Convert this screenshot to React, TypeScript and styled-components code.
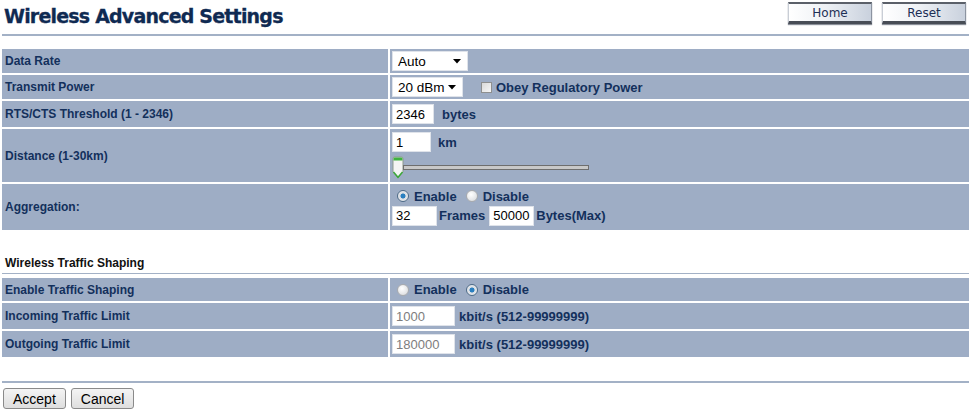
import { styled, createGlobalStyle } from "styled-components";

const GlobalStyle = createGlobalStyle`
  html, body { margin: 0; padding: 0; background: #fff; }
  body { font-family: "Liberation Sans", Arial, sans-serif; }
`;

const navy = "#13305c";
const rowBg = "#9eadc5";

const Page = styled.div`
  width: 971px;
  padding: 0 2px;
  box-sizing: border-box;
`;

const Header = styled.div`
  display: flex;
  justify-content: space-between;
  align-items: flex-start;
  height: 34px;
  border-bottom: 2px solid #a3b1c6;
`;

const Title = styled.h1`
  margin: 5px 0 0 2px;
  font-family: "DejaVu Sans", Verdana, sans-serif;
  font-size: 19px;
  font-weight: bold;
  color: #0f2a52;
  letter-spacing: -0.8px;
  -webkit-text-stroke: 0.3px #0f2a52;
`;

const NavButtons = styled.div`
  display: flex;
  gap: 10px;
  margin: 2px 3px 0 0;
`;

const NavButton = styled.div`
  width: 82px;
  height: 17px;
  box-sizing: content-box;
  border-top: 2px solid #5b6069;
  border-bottom: 3px solid #484d56;
  border-left: 1px solid #c9ced6;
  border-right: 1px solid #8c94a1;
  background: linear-gradient(to right, #ffffff 0%, #eef1f5 45%, #c9d1dd 100%);
  box-shadow: 0 1px 1px #8a8f98;
  display: flex;
  align-items: center;
  justify-content: center;
  font-family: "DejaVu Sans", Verdana, sans-serif;
  font-size: 12px;
  color: #1d2f55;
`;

const Table = styled.div<{ $top: number }>`
  display: flex;
  flex-direction: column;
  gap: 2px;
  margin-top: ${(p) => p.$top}px;
`;

const Row = styled.div<{ $h: number }>`
  display: grid;
  grid-template-columns: 386px 1fr;
  column-gap: 2px;
  height: ${(p) => p.$h}px;
`;

const LabelCell = styled.div`
  background: ${rowBg};
  display: flex;
  align-items: center;
  padding-left: 3px;
  font-size: 12px;
  font-weight: bold;
  color: ${navy};
`;

const ValueCell = styled.div`
  background: ${rowBg};
  display: flex;
  flex-direction: column;
  justify-content: center;
  gap: 2px;
  padding-left: 2px;
`;

const Line = styled.div<{ $gap?: number }>`
  display: flex;
  align-items: center;
  gap: ${(p) => p.$gap ?? 4}px;
  font-size: 13px;
  font-weight: bold;
  color: ${navy};
  white-space: nowrap;
`;

const Unit = styled.span<{ $left?: number }>`
  margin-left: ${(p) => p.$left ?? 0}px;
`;

const TextBox = styled.div<{ $w: number; $disabled?: boolean }>`
  width: ${(p) => p.$w}px;
  height: 20px;
  box-sizing: border-box;
  background: #fff;
  border: 1px solid #dfe3ea;
  padding: 0 3px;
  display: flex;
  align-items: center;
  font-size: 13px;
  font-weight: normal;
  color: ${(p) => (p.$disabled ? "#7d7d7d" : "#000")};
`;

const Select = styled.div<{ $w: number }>`
  width: ${(p) => p.$w}px;
  height: 20px;
  box-sizing: border-box;
  background: #fff;
  border: 1px solid #dfe3ea;
  padding: 0 6px 0 5px;
  display: flex;
  align-items: center;
  justify-content: space-between;
  font-size: 13.5px;
  font-weight: normal;
  color: #000;
`;

const Caret = () => (
  <svg width="8" height="5" viewBox="0 0 8 5">
    <path d="M0 0h8L4 4.5z" fill="#000" />
  </svg>
);

const CheckBox = styled.span`
  width: 11px;
  height: 11px;
  box-sizing: border-box;
  border: 1px solid #8e8f8f;
  background: linear-gradient(135deg, #d9d9d9, #f6f6f6);
  margin-left: 14px;
`;

const RadioDot = styled.span<{ $on?: boolean }>`
  width: 12px;
  height: 12px;
  box-sizing: border-box;
  border-radius: 50%;
  border: 1px solid ${(p) => (p.$on ? "#4d6a87" : "#a9abae")};
  background: ${(p) =>
    p.$on
      ? "radial-gradient(circle, #2a7fc0 0 2.2px, #d8dde3 2.8px, #f4f5f7 100%)"
      : "radial-gradient(circle at 40% 35%, #ffffff, #d5d7da)"};
  margin: 0 1px 0 5px;
`;

const Radio = ({ on, label }: { on?: boolean; label: string }) => (
  <>
    <RadioDot $on={on} />
    <span>{label}</span>
  </>
);

const Slider = styled.div`
  display: flex;
  align-items: center;
  height: 23px;
  padding-top: 2px;
`;

const Track = styled.div`
  width: 184px;
  height: 3px;
  background: #c8c8c8;
  border: 1px solid #6e6e6e;
  margin-left: -1px;
`;

const Thumb = () => (
  <svg width="12" height="23" viewBox="0 0 12 23">
    <path d="M1 2.5 Q1 1 2.5 1 H9.5 Q11 1 11 2.5 V16 L6 22 L1 16 Z" fill="#f4f4f4" stroke="#8d9a8d" />
    <path d="M1.5 2.5 Q1.5 1.5 2.5 1.5 H9.5 Q10.5 1.5 10.5 2.5 V4.5 H1.5 Z" fill="#3fb23f" />
    <path d="M1.5 16 L6 21.3 L10.5 16" fill="none" stroke="#39a839" strokeWidth="1.4" />
  </svg>
);

const SectionTitle = styled.div`
  margin-top: 26px;
  padding: 0 0 3px 3px;
  font-size: 12px;
  font-weight: bold;
  color: #111;
  border-bottom: 1px solid #a3b1c6;
`;

const Footer = styled.div`
  margin-top: 24px;
  border-top: 2px solid #a3b1c6;
  padding-top: 5px;
  display: flex;
  gap: 5px;
  padding-left: 1px;
`;

const FormButton = styled.button`
  height: 21px;
  padding: 0 9px;
  font-family: "Liberation Sans", Arial, sans-serif;
  font-size: 14px;
  color: #000;
  background: linear-gradient(#f4f4f4, #dedede);
  border: 1px solid #8a8a8a;
  border-radius: 3px;
`;

export default function App() {
  return (
    <Page>
      <GlobalStyle />
      <Header>
        <Title>Wireless Advanced Settings</Title>
        <NavButtons>
          <NavButton>Home</NavButton>
          <NavButton>Reset</NavButton>
        </NavButtons>
      </Header>

      <Table $top={13}>
        <Row $h={24}>
          <LabelCell>Data Rate</LabelCell>
          <ValueCell>
            <Line>
              <Select $w={76}>
                Auto <Caret />
              </Select>
            </Line>
          </ValueCell>
        </Row>
        <Row $h={24}>
          <LabelCell>Transmit Power</LabelCell>
          <ValueCell>
            <Line>
              <Select $w={71}>
                20 dBm <Caret />
              </Select>
              <CheckBox />
              <span>Obey Regulatory Power</span>
            </Line>
          </ValueCell>
        </Row>
        <Row $h={26}>
          <LabelCell>RTS/CTS Threshold (1 - 2346)</LabelCell>
          <ValueCell>
            <Line>
              <TextBox $w={42}>2346</TextBox>
              <Unit $left={4}>bytes</Unit>
            </Line>
          </ValueCell>
        </Row>
        <Row $h={53}>
          <LabelCell>Distance (1-30km)</LabelCell>
          <ValueCell>
            <Line>
              <TextBox $w={39}>1</TextBox>
              <Unit $left={3}>km</Unit>
            </Line>
            <Slider>
              <Thumb />
              <Track />
            </Slider>
          </ValueCell>
        </Row>
        <Row $h={46}>
          <LabelCell>Aggregation:</LabelCell>
          <ValueCell>
            <Line>
              <Radio on label="Enable" />
              <Radio label="Disable" />
            </Line>
            <Line $gap={2}>
              <TextBox $w={45}>32</TextBox>
              <span>Frames</span>
              <Unit $left={2}>
                <TextBox $w={45}>50000</TextBox>
              </Unit>
              <span>Bytes(Max)</span>
            </Line>
          </ValueCell>
        </Row>
      </Table>

      <SectionTitle>Wireless Traffic Shaping</SectionTitle>

      <Table $top={4}>
        <Row $h={23}>
          <LabelCell>Enable Traffic Shaping</LabelCell>
          <ValueCell>
            <Line>
              <Radio label="Enable" />
              <Radio on label="Disable" />
            </Line>
          </ValueCell>
        </Row>
        <Row $h={26}>
          <LabelCell>Incoming Traffic Limit</LabelCell>
          <ValueCell>
            <Line>
              <TextBox $w={63} $disabled>
                1000
              </TextBox>
              <span>kbit/s (512-99999999)</span>
            </Line>
          </ValueCell>
        </Row>
        <Row $h={26}>
          <LabelCell>Outgoing Traffic Limit</LabelCell>
          <ValueCell>
            <Line>
              <TextBox $w={63} $disabled>
                180000
              </TextBox>
              <span>kbit/s (512-99999999)</span>
            </Line>
          </ValueCell>
        </Row>
      </Table>

      <Footer>
        <FormButton>Accept</FormButton>
        <FormButton>Cancel</FormButton>
      </Footer>
    </Page>
  );
}
